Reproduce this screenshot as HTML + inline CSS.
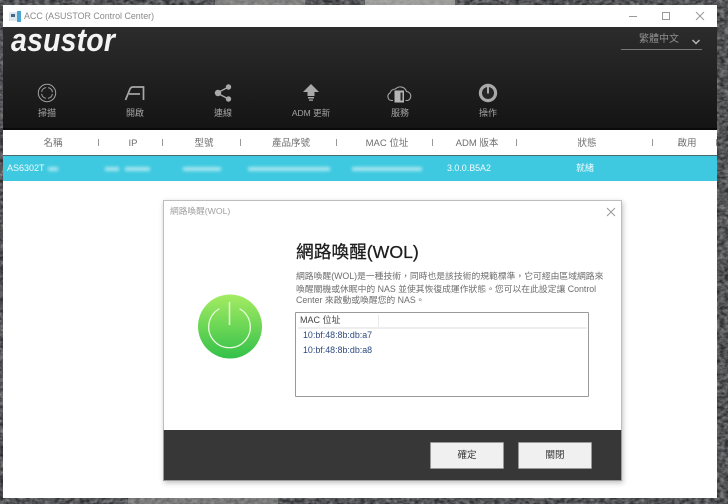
<!DOCTYPE html>
<html><head><meta charset="utf-8"><style>
*{box-sizing:border-box}
html,body{margin:0;padding:0;width:728px;height:504px;overflow:hidden;background:#3a3b3d}
body{position:relative;font-family:"Liberation Sans","Noto Sans CJK TC",sans-serif}
.a{position:absolute}
.t{position:absolute;white-space:nowrap;line-height:1}
.lab{color:#a4a4a4;font-size:9px;transform:translateX(-50%);top:109px}
.th{color:#6e6e6e;font-size:9.500px;transform:translateX(-50%);top:139px}
.sep{position:absolute;top:139px;width:1px;height:7px;background:#999}
.blur{position:absolute;background:#a9e6f0;filter:blur(1.5px);height:4px;top:167px}
</style></head><body>
<svg class="a" style="left:0;top:0" width="728" height="504">
<filter id="n" color-interpolation-filters="sRGB"><feTurbulence type="fractalNoise" baseFrequency="0.2 0.3" numOctaves="3" seed="4"/><feColorMatrix values="0 0 0 0 0.52 0 0 0 0 0.52 0 0 0 0 0.53 1.6 0 0 0 -0.35"/></filter>
<rect width="728" height="504" fill="#2b2c2f"/>
<rect width="728" height="504" filter="url(#n)"/>
<rect x="215" y="0" width="90" height="5" fill="#a9a9a6" opacity=".55"/>
<rect x="365" y="0" width="90" height="5" fill="#b5b5b2" opacity=".75"/>
<rect x="128" y="498" width="150" height="6" fill="#a9a9a6" opacity=".45"/>
</svg>
<div class="a" style="left:3px;top:5px;width:714px;height:493px;background:#fff"></div>
<!-- title bar -->
<svg class="a" style="left:9px;top:11px" width="12" height="11"><rect x="0" y="1" width="11" height="9" fill="#dfe7ee"/><rect x="8" y="0" width="4" height="11" fill="#4aa5d2"/><rect x="2" y="3" width="4" height="3" fill="#44678a"/></svg>
<div class="t" style="left:24px;top:12px;font-size:8.900px;color:#8a8a8a">ACC (ASUSTOR Control Center)</div>
<svg class="a" style="left:625px;top:8px" width="90" height="16" fill="none" stroke="#9a9a9a"><path d="M4 8.500h8" /><rect x="37.500" y="4.500" width="7" height="7"/><path d="M71 4l8 8M79 4l-8 8"/></svg>
<!-- header -->
<div class="a" style="left:3px;top:27px;width:714px;height:103px;background:linear-gradient(#2c2c2c,#141414)"></div>
<div class="t" style="left:11px;top:24px;font-size:32px;font-weight:bold;font-style:italic;color:#f4f4f4;letter-spacing:.2px;transform:scaleX(.89);transform-origin:left">asustor</div>
<div class="t" style="left:639px;top:35px;font-size:10px;color:#8f8f8f">繁體中文</div>
<svg class="a" style="left:690px;top:38px" width="12" height="8" fill="none" stroke="#b5b5b5" stroke-width="1.500"><path d="M2.500 2l3.500 3.500 3.500-3.500"/></svg>
<div class="a" style="left:621px;top:49px;width:81px;height:1px;background:#777"></div>
<!-- icons -->
<svg class="a" style="left:36px;top:82px" width="22" height="22" fill="none" stroke="#a0a0a0" stroke-width="1"><circle cx="11" cy="11" r="8.700"/><circle cx="11" cy="11" r="5.500" stroke-dasharray="6.640 2" stroke-dashoffset="-1"/></svg>
<svg class="a" style="left:123px;top:84px" width="24" height="18" fill="none" stroke="#a8a8a8" stroke-width="1.700"><path d="M2.500 16L7 5Q8 3 10 3H20.500V16"/><path d="M6 10H17"/></svg>
<svg class="a" style="left:213px;top:83px" width="20" height="20" fill="#a9a9a9" stroke="#a9a9a9"><path d="M4 10L15.500 4M4 10l11.500 6" stroke-width="1.300"/><circle cx="5" cy="10" r="3.200" stroke="none"/><circle cx="15.500" cy="4" r="2.700" stroke="none"/><circle cx="15.500" cy="16" r="2.700" stroke="none"/></svg>
<svg class="a" style="left:302px;top:83px" width="18" height="20" fill="#a9a9a9"><path d="M9 1L17 9H12.500V13H5.500V9H1Z"/><rect x="6" y="14" width="6" height="1.500"/><rect x="7" y="16.500" width="4" height="1.300"/></svg>
<svg class="a" style="left:386px;top:83px" width="27" height="21" fill="none" stroke="#a5a5a5" stroke-width="1.100"><path d="M7 17.500H5.500A4 4 0 0 1 4 10 6 6 0 0 1 9.500 6 6.500 6.500 0 0 1 20.500 8.500 4.600 4.600 0 0 1 21.500 17.500H19.500"/><rect x="8.500" y="7.500" width="9.500" height="12" fill="#b5b5b5" stroke="none"/><rect x="14.500" y="9.500" width="2" height="8" fill="#242424" stroke="none"/></svg>
<svg class="a" style="left:478px;top:83px" width="20" height="20" fill="none"><circle cx="10" cy="10" r="9.200" fill="#a8a8a8"/><circle cx="10" cy="10" r="6" fill="#262626"/><path d="M10 3v7.500" stroke="#a8a8a8" stroke-width="2"/></svg>
<div class="t lab" style="left:47px">掃描</div>
<div class="t lab" style="left:135px">開啟</div>
<div class="t lab" style="left:223px">連線</div>
<div class="t lab" style="left:311px;font-size:8.500px">ADM 更新</div>
<div class="t lab" style="left:400px">服務</div>
<div class="t lab" style="left:488px">操作</div>
<!-- table -->
<div class="a" style="left:3px;top:128px;width:714px;height:2px;background:#0a0a0a"></div>
<div class="t th" style="left:53px">名稱</div><div class="sep" style="left:98px"></div>
<div class="t th" style="left:133px">IP</div><div class="sep" style="left:162px"></div>
<div class="t th" style="left:204px">型號</div><div class="sep" style="left:240px"></div>
<div class="t th" style="left:291px">產品序號</div><div class="sep" style="left:336px"></div>
<div class="t th" style="left:387px">MAC 位址</div><div class="sep" style="left:432px"></div>
<div class="t th" style="left:477px">ADM 版本</div><div class="sep" style="left:516px"></div>
<div class="t th" style="left:587px">狀態</div><div class="sep" style="left:652px"></div>
<div class="t th" style="left:687px">啟用</div><div class="sep" style="left:716px"></div>
<div class="a" style="left:3px;top:155px;width:714px;height:26px;background:#3ec9e0;border-top:1px solid #4a6a72"></div>
<div class="t" style="left:7px;top:164px;font-size:9px;color:#f2fbfd">AS6302T</div>
<div class="blur" style="left:48px;width:10px"></div>
<div class="blur" style="left:105px;width:14px"></div>
<div class="blur" style="left:125px;width:25px"></div>
<div class="blur" style="left:183px;width:38px"></div>
<div class="blur" style="left:248px;width:82px"></div>
<div class="blur" style="left:352px;width:70px"></div>
<div class="t" style="left:447px;top:164px;font-size:8.900px;color:#f2fbfd">3.0.0.B5A2</div>
<div class="t" style="left:576px;top:164px;font-size:9px;color:#f2fbfd">就緒</div>
<!-- dialog -->
<div class="a" style="left:163px;top:200px;width:459px;height:281px;background:#fff;border:1px solid #bdbdbd;box-shadow:1px 2px 5px rgba(0,0,0,.25)"></div>
<div class="t" style="left:170px;top:207px;font-size:8.700px;color:#a0a0a0">網路喚醒(WOL)</div>
<svg class="a" style="left:606px;top:207px" width="10" height="10" fill="none" stroke="#999"><path d="M1 1l8 8M9 1l-8 8"/></svg>
<div class="t" style="left:296px;top:244px;font-size:17.700px;color:#1c1c1c;-webkit-text-stroke:.25px #1c1c1c">網路喚醒(WOL)</div>
<div class="t" style="left:296px;top:272px;font-size:8.800px;color:#6d6d6d">網路喚醒(WOL)是一種技術，同時也是該技術的規範標準，它可經由區域網路來</div>
<div class="t" style="left:296px;top:285px;font-size:8.800px;color:#6d6d6d">喚醒關機或休眠中的 NAS 並使其恢復成運作狀態。您可以在此設定讓 Control</div>
<div class="t" style="left:296px;top:296px;font-size:8.800px;color:#6d6d6d">Center 來啟動或喚醒您的 NAS。</div>
<svg class="a" style="left:196px;top:293px" width="68" height="68"><defs><linearGradient id="g" x1="0" y1="0" x2="0" y2="1"><stop offset="0" stop-color="#a4ec62"/><stop offset="1" stop-color="#33c14a"/></linearGradient></defs><circle cx="34" cy="33.500" r="32" fill="url(#g)"/><path d="M23 16A20.800 20.800 0 1 0 44 16" fill="none" stroke="#eafbdc" stroke-width="1.300" stroke-linecap="round"/><path d="M33.500 9V32" fill="none" stroke="#eafbdc" stroke-width="1.500"/></svg>
<div class="a" style="left:295px;top:312px;width:294px;height:85px;background:#fff;border:1px solid #9a9a9a;border-radius:1px"></div>
<div class="t" style="left:300px;top:316px;font-size:9px;color:#444">MAC 位址</div>
<div class="a" style="left:378px;top:315px;width:1px;height:13px;background:#eaeaea"></div>
<div class="a" style="left:298px;top:327px;width:289px;height:2px;background:#eeeeee"></div>
<div class="t" style="left:303px;top:331px;font-size:8.900px;color:#2e4a80">10:bf:48:8b:db:a7</div>
<div class="t" style="left:303px;top:346px;font-size:8.900px;color:#2e4a80">10:bf:48:8b:db:a8</div>
<!-- footer -->
<div class="a" style="left:163px;top:430px;width:459px;height:51px;background:#373737;border:1px solid #9a9a9a;border-width:0 1px 1px 1px"></div>
<div class="a" style="left:430px;top:442px;width:74px;height:27px;background:#f0f0f0;border:1px solid #999;border-radius:1px;color:#333;font-size:9.500px;text-align:center;line-height:25px">確定</div>
<div class="a" style="left:518px;top:442px;width:74px;height:27px;background:#f0f0f0;border:1px solid #999;border-radius:1px;color:#333;font-size:9.500px;text-align:center;line-height:25px">關閉</div>
</body></html>
